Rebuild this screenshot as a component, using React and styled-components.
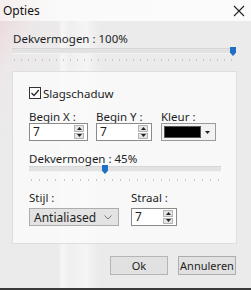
import React from "react";
import styled, { createGlobalStyle } from "styled-components";

const Global = createGlobalStyle`
  html, body { margin: 0; padding: 0; background: #e8e8e8; }
  * { box-sizing: border-box; }
`;

const Window = styled.div`
  width: 251px;
  height: 290px;
  display: flex;
  flex-direction: column;
  font-family: "Noto Sans", "Open Sans", sans-serif;
  font-size: 11.5px;
  color: #1e1e1e;
  border-bottom: 2px solid #3a3a3a;
  overflow: hidden;
  background:
    linear-gradient(90deg, rgba(255,255,255,0) 0px, rgba(255,255,255,0) 58px, rgba(255,255,255,0.55) 62px, rgba(255,255,255,0.2) 70px, rgba(255,255,255,0.5) 86px, rgba(255,255,255,0.1) 96px, rgba(255,255,255,0) 100px),
    linear-gradient(120deg, rgba(235,205,210,0.7) 0px, rgba(240,225,228,0.3) 40px, rgba(236,236,236,0) 80px),
    #ebebeb;
`;

const TitleBar = styled.div`
  height: 21px;
  flex: none;
  display: flex;
  align-items: center;
  justify-content: space-between;
  padding: 0 6px 0 3px;
  background: linear-gradient(90deg, #f6eeee 0px, #fafafa 60px, #fbfbfb 100%);
  font-size: 12px;
  color: #111;
`;

const Close = styled.span`
  display: flex;
  width: 12px;
  height: 12px;
`;

const Body = styled.div`
  flex: 1;
  display: flex;
  flex-direction: column;
  padding: 11px 15px 0 12px;
`;

const Label = styled.div`
  line-height: 13px;
  height: 13px;
  padding-left: ${p => p.$indent || 0}px;
  margin-top: ${p => p.$mt || 0}px;
  white-space: nowrap;
`;

const SliderWrap = styled.div`
  display: flex;
  flex-direction: column;
  width: ${p => p.$w}px;
  margin-top: ${p => p.$mt}px;
`;

const Track = styled.div`
  position: relative;
  height: 6px;
  background: #e2e2e2;
  border-top: 1px solid #d6d6d6;
  border-bottom: 1px solid #f4f4f4;
`;

const Thumb = styled.div`
  position: absolute;
  top: -2px;
  width: 6px;
  height: 9px;
  background: #1f6fc6;
  clip-path: polygon(0 0, 100% 0, 100% 65%, 50% 100%, 0 65%);
`;

const Ticks = styled.div`
  display: flex;
  justify-content: space-between;
  margin-top: ${p => p.$gap}px;
  padding: 0 2px;
`;

const Tick = styled.span`
  width: 1px;
  height: 2px;
  background: #c6c6c6;
`;

const Group = styled.div`
  margin-top: 10px;
  width: 225px;
  height: 173px;
  background: rgba(250,250,250,0.85);
  border: 1px solid #dedede;
  display: flex;
  flex-direction: column;
  padding: 14px 0 0 16px;
`;

const CheckRow = styled.label`
  display: flex;
  align-items: center;
  gap: 2px;
  height: 14px;
`;

const CheckBox = styled.span`
  width: 12px;
  height: 12px;
  border: 1px solid #333;
  background: #fff;
  display: flex;
  align-items: center;
  justify-content: center;
`;

const FieldRow = styled.div`
  display: flex;
  margin-top: ${p => p.$mt}px;
`;

const Field = styled.div`
  display: flex;
  flex-direction: column;
  width: ${p => p.$w}px;
  margin-right: ${p => p.$mr || 0}px;
`;

const InputBox = styled.div`
  height: 18px;
  margin-top: ${p => p.$mt || 0}px;
  display: flex;
  align-items: stretch;
  background: #fff;
  border: 1px solid #8a8a8a;
  padding: 1px;
`;

const InputText = styled.span`
  flex: 1;
  line-height: 14px;
  padding-left: 2px;
  font-size: 12px;
`;

const Spinner = styled.span`
  width: 10px;
  display: flex;
  flex-direction: column;
  gap: 1px;
  margin-right: 2px;
`;

const SpinBtn = styled.span`
  flex: 1;
  background: #e4e4e4;
  border: 1px solid #b4b4b4;
  display: flex;
  align-items: center;
  justify-content: center;
`;

const ColorCombo = styled.div`
  height: 18px;
  display: flex;
  align-items: stretch;
  background: #f2f2f2;
  border: 1px solid #9a9a9a;
  padding: 2px;
`;

const Swatch = styled.span`
  flex: 1;
  background: #000;
  border: 1px solid #555;
`;

const Arrow = styled.span`
  width: 12px;
  display: flex;
  align-items: center;
  justify-content: center;
`;

const Select = styled.div`
  height: 18px;
  margin-top: ${p => p.$mt || 0}px;
  display: flex;
  align-items: center;
  justify-content: space-between;
  background: #e3e3e3;
  border: 1px solid #adadad;
  padding: 0 6px 0 4px;
  font-size: 12px;
`;

const Buttons = styled.div`
  display: flex;
  justify-content: flex-end;
  gap: 10px;
  margin-top: 12px;
  width: 224px;
`;

const Button = styled.button`
  width: 58px;
  height: 19px;
  padding: 0;
  font-family: inherit;
  font-size: 11px;
  color: #1e1e1e;
  background: #e1e1e1;
  border: 1px solid ${p => (p.$default ? "#b5b5b5" : "#adadad")};
`;

const TickRow = ({ n, gap }) => (
  <Ticks $gap={gap}>
    {Array.from({ length: n }).map((_, i) => (
      <Tick key={i} />
    ))}
  </Ticks>
);

const Spin = () => (
  <Spinner>
    <SpinBtn>
      <svg width="5" height="3" viewBox="0 0 5 3"><path d="M0 3 L2.5 0 L5 3Z" fill="#222" /></svg>
    </SpinBtn>
    <SpinBtn>
      <svg width="5" height="3" viewBox="0 0 5 3"><path d="M0 0 L2.5 3 L5 0Z" fill="#222" /></svg>
    </SpinBtn>
  </Spinner>
);

export default function App() {
  return (
    <>
      <Global />
      <Window>
        <TitleBar>
          <span>Opties</span>
          <Close>
            <svg width="12" height="12" viewBox="0 0 12 12">
              <path d="M1 1 L11 11 M11 1 L1 11" stroke="#222" strokeWidth="1.1" />
            </svg>
          </Close>
        </TitleBar>
        <Body>
          <Label $indent={1}>Dekvermogen : 100%</Label>
          <SliderWrap $w={222} $mt={3}>
            <Track>
              <Thumb style={{ left: "100%", marginLeft: -4 }} />
            </Track>
            <TickRow n={32} gap={5} />
          </SliderWrap>
          <Group>
            <CheckRow>
              <CheckBox>
                <svg width="10" height="10" viewBox="0 0 10 10">
                  <path d="M1.5 5 L4 7.5 L8.8 2" fill="none" stroke="#222" strokeWidth="1.2" />
                </svg>
              </CheckBox>
              <span>Slagschaduw</span>
            </CheckRow>
            <FieldRow $mt={10}>
              <Field $w={59} $mr={8}>
                <Label>Begin X :</Label>
                <InputBox>
                  <InputText>7</InputText>
                  <Spin />
                </InputBox>
              </Field>
              <Field $w={56} $mr={9}>
                <Label>Begin Y :</Label>
                <InputBox>
                  <InputText>7</InputText>
                  <Spin />
                </InputBox>
              </Field>
              <Field $w={55}>
                <Label>Kleur :</Label>
                <ColorCombo>
                  <Swatch />
                  <Arrow>
                    <svg width="5" height="3" viewBox="0 0 5 3"><path d="M0 0 L2.5 3 L5 0Z" fill="#222" /></svg>
                  </Arrow>
                </ColorCombo>
              </Field>
            </FieldRow>
            <Label $mt={11}>Dekvermogen : 45%</Label>
            <SliderWrap $w={192} $mt={1}>
              <Track>
                <Thumb style={{ left: "38%" }} />
              </Track>
              <TickRow n={24} gap={7} />
            </SliderWrap>
            <FieldRow $mt={10}>
              <Field $w={90} $mr={12}>
                <Label>Stijl :</Label>
                <Select $mt={4}>
                  <span>Antialiased</span>
                  <svg width="8" height="5" viewBox="0 0 8 5"><path d="M0.5 0.5 L4 4 L7.5 0.5" fill="none" stroke="#777" strokeWidth="1" /></svg>
                </Select>
              </Field>
              <Field $w={46}>
                <Label>Straal :</Label>
                <InputBox $mt={4}>
                  <InputText>7</InputText>
                  <Spin />
                </InputBox>
              </Field>
            </FieldRow>
          </Group>
          <Buttons>
            <Button $default>Ok</Button>
            <Button>Annuleren</Button>
          </Buttons>
        </Body>
      </Window>
    </>
  );
}
